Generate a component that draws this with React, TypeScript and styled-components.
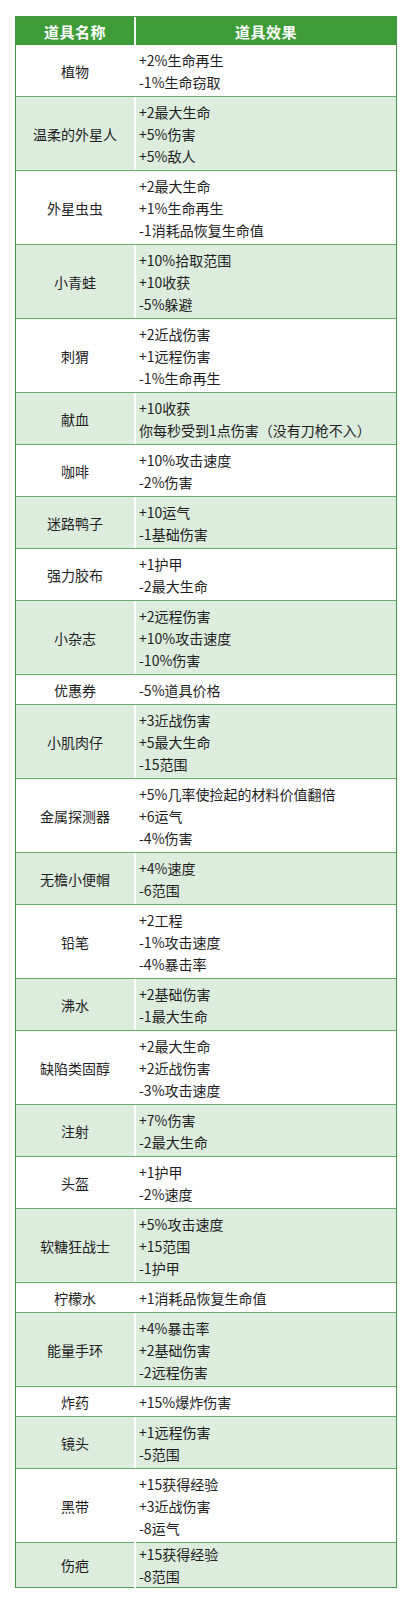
import React from 'react';
import styled, { createGlobalStyle } from 'styled-components';

const GlobalStyle = createGlobalStyle`
  body {
    margin: 0;
    background: #fff;
    font-family: "Noto Sans CJK SC", "Noto Sans", sans-serif;
  }
`;

const Table = styled.div`
  width: 382px;
  margin: 16px 0 0 15px;
  border: 1px solid #44964a;
  border-bottom-color: #4f9c55;
  box-sizing: border-box;
`;

const Row = styled.div<{ $alt?: boolean; $tight?: boolean }>`
  display: grid;
  grid-template-columns: 118px 2px 1fr;
  background: ${(p) => (p.$alt ? '#dcecdd' : '#fff')};
  border-bottom: 1px solid #6aab6c;
  padding: ${(p) => (p.$tight ? '0' : '4px 0 3px')};

  &:last-child {
    border-bottom: none;
  }
`;

const HeadRow = styled.div`
  display: grid;
  grid-template-columns: 118px 2px 1fr;
  height: 28px;
  background: #3d9c38;
`;

const HeadCell = styled.div`
  display: flex;
  align-items: center;
  justify-content: center;
  color: #fff;
  font-size: 15px;
  font-weight: 700;
  letter-spacing: 0.5px;
`;

const Divider = styled.div`
  background: #fff;
  margin: -4px 0 -3px;
`;

const HeadDivider = styled.div`
  background: #f2f8f2;
`;

const NameCell = styled.div`
  display: flex;
  align-items: center;
  justify-content: center;
  font-size: 14px;
  color: #1e1e1e;
  line-height: 22px;
`;

const EffectCell = styled.div`
  padding-left: 3px;
  font-size: 14px;
  color: #1e1e1e;
  line-height: 22px;
  white-space: nowrap;
`;

const Line = styled.div``;

const items: [string, string[]][] = [
  ['植物', ['+2%生命再生', '-1%生命窃取']],
  ['温柔的外星人', ['+2最大生命', '+5%伤害', '+5%敌人']],
  ['外星虫虫', ['+2最大生命', '+1%生命再生', '-1消耗品恢复生命值']],
  ['小青蛙', ['+10%拾取范围', '+10收获', '-5%躲避']],
  ['刺猬', ['+2近战伤害', '+1远程伤害', '-1%生命再生']],
  ['献血', ['+10收获', '你每秒受到1点伤害（没有刀枪不入）']],
  ['咖啡', ['+10%攻击速度', '-2%伤害']],
  ['迷路鸭子', ['+10运气', '-1基础伤害']],
  ['强力胶布', ['+1护甲', '-2最大生命']],
  ['小杂志', ['+2远程伤害', '+10%攻击速度', '-10%伤害']],
  ['优惠券', ['-5%道具价格']],
  ['小肌肉仔', ['+3近战伤害', '+5最大生命', '-15范围']],
  ['金属探测器', ['+5%几率使捡起的材料价值翻倍', '+6运气', '-4%伤害']],
  ['无檐小便帽', ['+4%速度', '-6范围']],
  ['铅笔', ['+2工程', '-1%攻击速度', '-4%暴击率']],
  ['沸水', ['+2基础伤害', '-1最大生命']],
  ['缺陷类固醇', ['+2最大生命', '+2近战伤害', '-3%攻击速度']],
  ['注射', ['+7%伤害', '-2最大生命']],
  ['头盔', ['+1护甲', '-2%速度']],
  ['软糖狂战士', ['+5%攻击速度', '+15范围', '-1护甲']],
  ['柠檬水', ['+1消耗品恢复生命值']],
  ['能量手环', ['+4%暴击率', '+2基础伤害', '-2远程伤害']],
  ['炸药', ['+15%爆炸伤害']],
  ['镜头', ['+1远程伤害', '-5范围']],
  ['黑带', ['+15获得经验', '+3近战伤害', '-8运气']],
  ['伤疤', ['+15获得经验', '-8范围']],
];

const App: React.FC = () => {
  return (
    <>
      <GlobalStyle />
      <Table>
        <HeadRow>
          <HeadCell>道具名称</HeadCell>
          <HeadDivider />
          <HeadCell>道具效果</HeadCell>
        </HeadRow>
        {items.map(([name, effects], i) => (
          <Row key={name} $alt={i % 2 === 1} $tight={i === items.length - 1}>
            <NameCell>{name}</NameCell>
            <Divider />
            <EffectCell>
              {effects.map((e) => (
                <Line key={e}>{e}</Line>
              ))}
            </EffectCell>
          </Row>
        ))}
      </Table>
    </>
  );
};

export default App;
